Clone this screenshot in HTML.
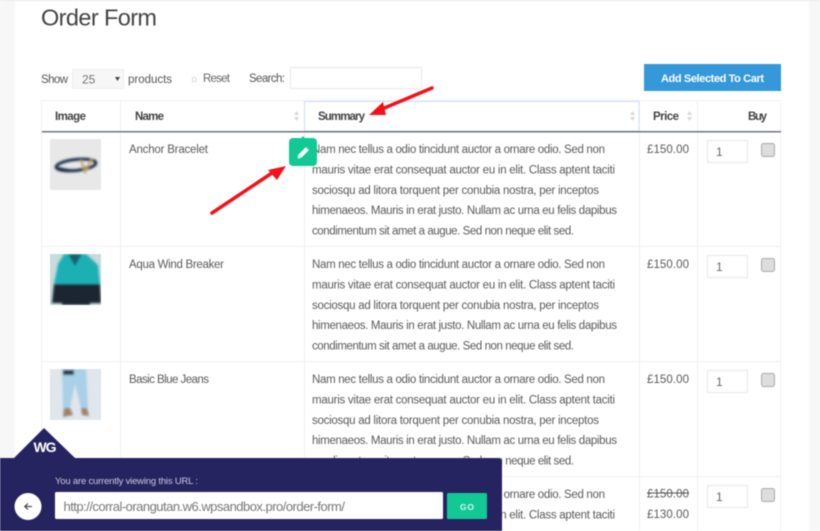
<!DOCTYPE html>
<html><head><meta charset="utf-8"><title>Order Form</title>
<style>
html,body{margin:0;padding:0;background:#fff;width:820px;height:531px;overflow:hidden}
svg{display:block;filter:blur(.45px)}
text{font-family:"Liberation Sans",sans-serif}
.b{font-size:11.500px;fill:#5a5a5a}
.h{font-size:11.500px;font-weight:bold;fill:#444}
</style></head><body>
<svg width="820" height="531" viewBox="0 0 820 531" xmlns="http://www.w3.org/2000/svg">
<defs>
<filter id="bl"><feGaussianBlur stdDeviation="1"/></filter>
<clipPath id="c1"><rect x="50" y="139" width="51" height="51"/></clipPath>
<clipPath id="c2"><rect x="50" y="254" width="51" height="51"/></clipPath>
<clipPath id="c3"><rect x="50" y="369" width="51" height="51"/></clipPath>
<g id="sort"><path d="M0 -1 L2.500 -5 L5 -1Z M0 1 L2.500 5 L5 1Z" fill="#d5d8dc"/></g>
<g id="qty"><rect x="707.500" y="0.500" width="40" height="22" fill="#fff" stroke="#e8e8e8"/><text x="716" y="16" font-size="12" fill="#666">1</text><rect x="761.500" y="3.500" width="13" height="13" rx="2" fill="#ddd" stroke="#aaa"/></g>
</defs>
<rect width="820" height="531" fill="#fff"/>
<rect x="0" y="0" width="15" height="531" fill="#f7f7f7"/>
<rect x="809" y="0" width="11" height="531" fill="#f7f7f7"/>
<rect x="0" y="0" width="820" height="1" fill="#e9e9e9"/>

<text x="41" y="25.500" font-size="23.500" fill="#444" textLength="116" lengthAdjust="spacing">Order Form</text>

<!-- controls -->
<text x="41" y="83" font-size="11.500" fill="#555" textLength="27" lengthAdjust="spacing">Show</text>
<rect x="72.500" y="69.500" width="51" height="19" fill="#f7f7f7" stroke="#eee"/>
<text x="82" y="83.500" font-size="12" fill="#777">25</text>
<path d="M115 77h5l-2.500 4z" fill="#444"/>
<text x="128" y="83" font-size="11.500" fill="#555" textLength="44" lengthAdjust="spacing">products</text>
<rect x="192.500" y="77.500" width="3.500" height="4" fill="none" stroke="#ddd"/>
<text x="203" y="82" font-size="11.500" fill="#666" textLength="27" lengthAdjust="spacing">Reset</text>
<text x="249" y="82" font-size="11.500" fill="#555" textLength="36" lengthAdjust="spacing">Search:</text>
<rect x="290.500" y="67.500" width="131" height="21" fill="#fff" stroke="#e4e7ea"/>
<rect x="644" y="64" width="137" height="27" fill="#3498db"/>
<text x="661" y="82" font-size="11" font-weight="bold" fill="#fff" textLength="103" lengthAdjust="spacing">Add Selected To Cart</text>

<!-- table grid -->
<g stroke="#eff0f2" fill="none">
<path d="M41.500 100.500H780.500V531M41.500 100.500V531M120.500 100.500V531M304.500 100.500V531M639.500 100.500V531M697.500 100.500V531"/>
<path d="M41 246.500H781M41 361.500H781M41 476.500H781"/>
</g>
<rect x="304.500" y="101.500" width="334.500" height="29.500" fill="#fff" stroke="#cfe1f5" stroke-width="1"/>
<rect x="42" y="131" width="739" height="1.500" fill="#6d7480"/>
<text class="h" x="55" y="120" textLength="31" lengthAdjust="spacing">Image</text>
<text class="h" x="135" y="120" textLength="29" lengthAdjust="spacing">Name</text>
<text class="h" x="318" y="120" textLength="47" lengthAdjust="spacing">Summary</text>
<text class="h" x="653" y="120" textLength="26" lengthAdjust="spacing">Price</text>
<text class="h" x="748" y="120" textLength="19" lengthAdjust="spacing">Buy</text>
<use href="#sort" x="294" y="116"/><use href="#sort" x="630" y="116"/><use href="#sort" x="687" y="116"/>

<!-- thumbnails -->
<g clip-path="url(#c1)"><rect x="50" y="139" width="51" height="51" fill="#e8e8e8"/>
<g filter="url(#bl)"><ellipse cx="76" cy="165" rx="20" ry="5.500" fill="none" stroke="#1f2f48" stroke-width="3" transform="rotate(-6 76 165)"/><path d="M58 168C68 171 80 172 90 166" fill="none" stroke="#1f2f48" stroke-width="2.500"/><path d="M81 160L85 172L92 159" fill="none" stroke="#b8a06c" stroke-width="2"/></g></g>
<g clip-path="url(#c2)"><rect x="50" y="254" width="51" height="51" fill="#c8dadb"/>
<g filter="url(#bl)"><path d="M64 254H86L98 265L100 284H54L58 264Z" fill="#1fb0b5"/><path d="M54 284H100L101 303H90V305H62V303H52Z" fill="#1b2530"/><path d="M68 254L75 266L82 254Z" fill="#15606a"/></g></g>
<g clip-path="url(#c3)"><rect x="50" y="369" width="51" height="51" fill="#dfe6ec"/>
<g filter="url(#bl)"><path d="M62 369H86L88 408H81L75 384L70 408H63Z" fill="#a9d0e8"/><path d="M63 370H74V375H63Z" fill="#2a3344"/><path d="M64 408L70 408L73 415L63 417Z" fill="#9d8268"/><path d="M81 408L87 408L89 416L82 415Z" fill="#9d8268"/></g></g>

<!-- names -->
<text class="b" x="129" y="153" textLength="79" lengthAdjust="spacing">Anchor Bracelet</text>
<text class="b" x="129" y="268" textLength="95" lengthAdjust="spacing">Aqua Wind Breaker</text>
<text class="b" x="129" y="383" textLength="80" lengthAdjust="spacing">Basic Blue Jeans</text>

<!-- summary -->
<g class="s">
<text class="b" x="312" y="153" textLength="293" lengthAdjust="spacing">Nam nec tellus a odio tincidunt auctor a ornare odio. Sed non</text>
<text class="b" x="312" y="173.500" textLength="303" lengthAdjust="spacing">mauris vitae erat consequat auctor eu in elit. Class aptent taciti</text>
<text class="b" x="312" y="194" textLength="287" lengthAdjust="spacing">sociosqu ad litora torquent per conubia nostra, per inceptos</text>
<text class="b" x="312" y="214" textLength="305" lengthAdjust="spacing">himenaeos. Mauris in erat justo. Nullam ac urna eu felis dapibus</text>
<text class="b" x="312" y="234.500" textLength="262" lengthAdjust="spacing">condimentum sit amet a augue. Sed non neque elit sed.</text>

<text class="b" x="312" y="268" textLength="293" lengthAdjust="spacing">Nam nec tellus a odio tincidunt auctor a ornare odio. Sed non</text>
<text class="b" x="312" y="288.500" textLength="303" lengthAdjust="spacing">mauris vitae erat consequat auctor eu in elit. Class aptent taciti</text>
<text class="b" x="312" y="309" textLength="287" lengthAdjust="spacing">sociosqu ad litora torquent per conubia nostra, per inceptos</text>
<text class="b" x="312" y="329" textLength="305" lengthAdjust="spacing">himenaeos. Mauris in erat justo. Nullam ac urna eu felis dapibus</text>
<text class="b" x="312" y="349.500" textLength="262" lengthAdjust="spacing">condimentum sit amet a augue. Sed non neque elit sed.</text>

<text class="b" x="312" y="383" textLength="293" lengthAdjust="spacing">Nam nec tellus a odio tincidunt auctor a ornare odio. Sed non</text>
<text class="b" x="312" y="403.500" textLength="303" lengthAdjust="spacing">mauris vitae erat consequat auctor eu in elit. Class aptent taciti</text>
<text class="b" x="312" y="424" textLength="287" lengthAdjust="spacing">sociosqu ad litora torquent per conubia nostra, per inceptos</text>
<text class="b" x="312" y="444" textLength="305" lengthAdjust="spacing">himenaeos. Mauris in erat justo. Nullam ac urna eu felis dapibus</text>
<text class="b" x="312" y="464.500" textLength="262" lengthAdjust="spacing">condimentum sit amet a augue. Sed non neque elit sed.</text>

<text class="b" x="312" y="498" textLength="293" lengthAdjust="spacing">Nam nec tellus a odio tincidunt auctor a ornare odio. Sed non</text>
<text class="b" x="312" y="518.500" textLength="303" lengthAdjust="spacing">mauris vitae erat consequat auctor eu in elit. Class aptent taciti</text>
</g>

<!-- prices -->
<text class="b" x="647" y="153" textLength="42" lengthAdjust="spacing">£150.00</text>
<text class="b" x="647" y="268" textLength="42" lengthAdjust="spacing">£150.00</text>
<text class="b" x="647" y="383" textLength="42" lengthAdjust="spacing">£150.00</text>
<text class="b" x="647" y="497.500" textLength="42" lengthAdjust="spacing">£150.00</text>
<rect x="647" y="492.500" width="42" height="1" fill="#555"/>
<text class="b" x="647" y="518" textLength="42" lengthAdjust="spacing">£130.00</text>

<!-- qty -->
<use href="#qty" y="140"/><use href="#qty" y="255"/><use href="#qty" y="370"/><use href="#qty" y="485"/>

<!-- edit button -->
<path d="M301 138.500L303 136L305 138.500Z" fill="#12c996"/>
<rect x="289" y="138" width="28" height="28" rx="4" fill="#12c996"/>
<path d="M297.500 158.500l.8-3.800 7.600-7.600 3 3-7.600 7.600z" fill="#fff"/>

<!-- arrows -->
<g fill="#f5101a">
<path d="M212 213L272 173" stroke="#f5101a" stroke-width="3.500" stroke-linecap="round"/>
<path d="M286 166L268 170L277 180Z"/>
<path d="M432 88L382 109" stroke="#f5101a" stroke-width="3.500" stroke-linecap="round"/>
<path d="M369 115L383 102L386 115Z"/>
</g>

<!-- bottom bar -->
<path d="M44 428L14 458H75Z" fill="#262460"/>
<text x="33.500" y="452" font-size="14" font-weight="bold" fill="#fff" textLength="23" lengthAdjust="spacing">WG</text>
<path d="M0 458H498a4 4 0 0 1 4 4V531H0Z" fill="#262460"/>
<text x="55" y="484" font-size="9.500" fill="#c9c9dc" textLength="143" lengthAdjust="spacing">You are currently viewing this URL :</text>
<circle cx="28" cy="506.500" r="13.500" fill="#fff"/>
<path d="M32 506.500H25M28 503.500L24.800 506.500L28 509.500" fill="none" stroke="#333" stroke-width="1.100"/>
<rect x="55" y="492" width="388" height="27" rx="1.500" fill="#fff"/>
<text x="63.500" y="511" font-size="13" fill="#777" textLength="281.500" lengthAdjust="spacing">http://corral-orangutan.w6.wpsandbox.pro/order-form/</text>
<rect x="447" y="493" width="40" height="26" rx="1.500" fill="#12c996"/>
<text x="460" y="510" font-size="8.500" font-weight="bold" fill="#d8f5ec" textLength="14" lengthAdjust="spacing">GO</text>
</svg>
</body></html>
